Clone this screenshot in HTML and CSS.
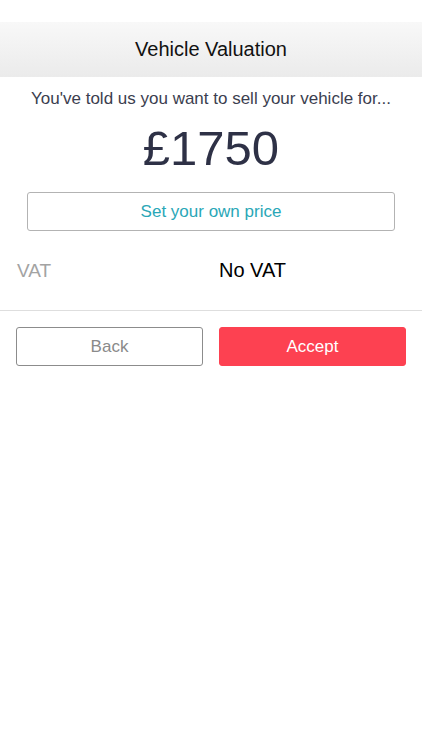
FILE: index.html
```html
<!DOCTYPE html>
<html lang="en">
<head>
    <meta charset="UTF-8">
    <meta name="viewport" content="width=device-width, initial-scale=1.0">
    <title>Vehicle Valuation</title>
    <link rel="stylesheet" href="styles.css">
</head>
<body>
    <div class="status-bar"></div>
    <header class="nav-bar">
        <h1>Vehicle Valuation</h1>
    </header>

    <main class="content">
        <p class="intro">You've told us you want to sell your vehicle for...</p>
        <div class="price">£1750</div>
        <button class="own-price">Set your own price</button>

        <div class="vat-row">
            <span class="vat-label">VAT</span>
            <span class="vat-value">No VAT</span>
        </div>
    </main>

    <div class="actions">
        <button class="btn btn-back">Back</button>
        <button class="btn btn-accept">Accept</button>
    </div>
</body>
</html>
```

FILE: styles.css
```css
body {
    margin: 0;
    background-color: #ffffff;
    font-family: 'Liberation Sans', Arial, Helvetica, sans-serif;
    color: #000;
}
.status-bar {
    height: 22px;
    background-color: #ffffff;
}
.nav-bar {
    height: 55px;
    background: linear-gradient(#f8f8f8, #ebebeb);
    display: flex;
    align-items: center;
    justify-content: center;
}
.nav-bar h1 {
    margin: 0;
    font-size: 20px;
    font-weight: normal;
    color: #111;
}
.content {
    display: flex;
    flex-direction: column;
    align-items: center;
}
.intro {
    margin: 12px 0 0;
    font-size: 17px;
    color: #3b3e4f;
}
.price {
    margin-top: 10px;
    font-size: 49px;
    color: #2e3146;
    line-height: 58px;
}
.own-price {
    margin-top: 15px;
    width: 368px;
    height: 39px;
    background-color: #fff;
    border: 1px solid #b3b3b3;
    border-radius: 3px;
    font-family: inherit;
    font-size: 17px;
    color: #2aa7b7;
}
.vat-row {
    align-self: stretch;
    display: flex;
    align-items: center;
    height: 79px;
    padding-left: 17px;
    border-bottom: 1px solid #dedede;
    font-size: 19px;
}
.vat-label {
    width: 202px;
    color: #a3a3a3;
}
.vat-value {
    font-size: 20px;
    color: #000;
}
.actions {
    display: flex;
    gap: 16px;
    padding: 16px 16px 0;
}
.btn {
    flex: 1;
    height: 39px;
    border-radius: 3px;
    font-family: inherit;
    font-size: 17px;
}
.btn-back {
    background-color: #fff;
    border: 1px solid #8c8c8c;
    color: #8a8a8a;
}
.btn-accept {
    background-color: #fd4151;
    border: 1px solid #fd4151;
    color: #fff;
}
```
